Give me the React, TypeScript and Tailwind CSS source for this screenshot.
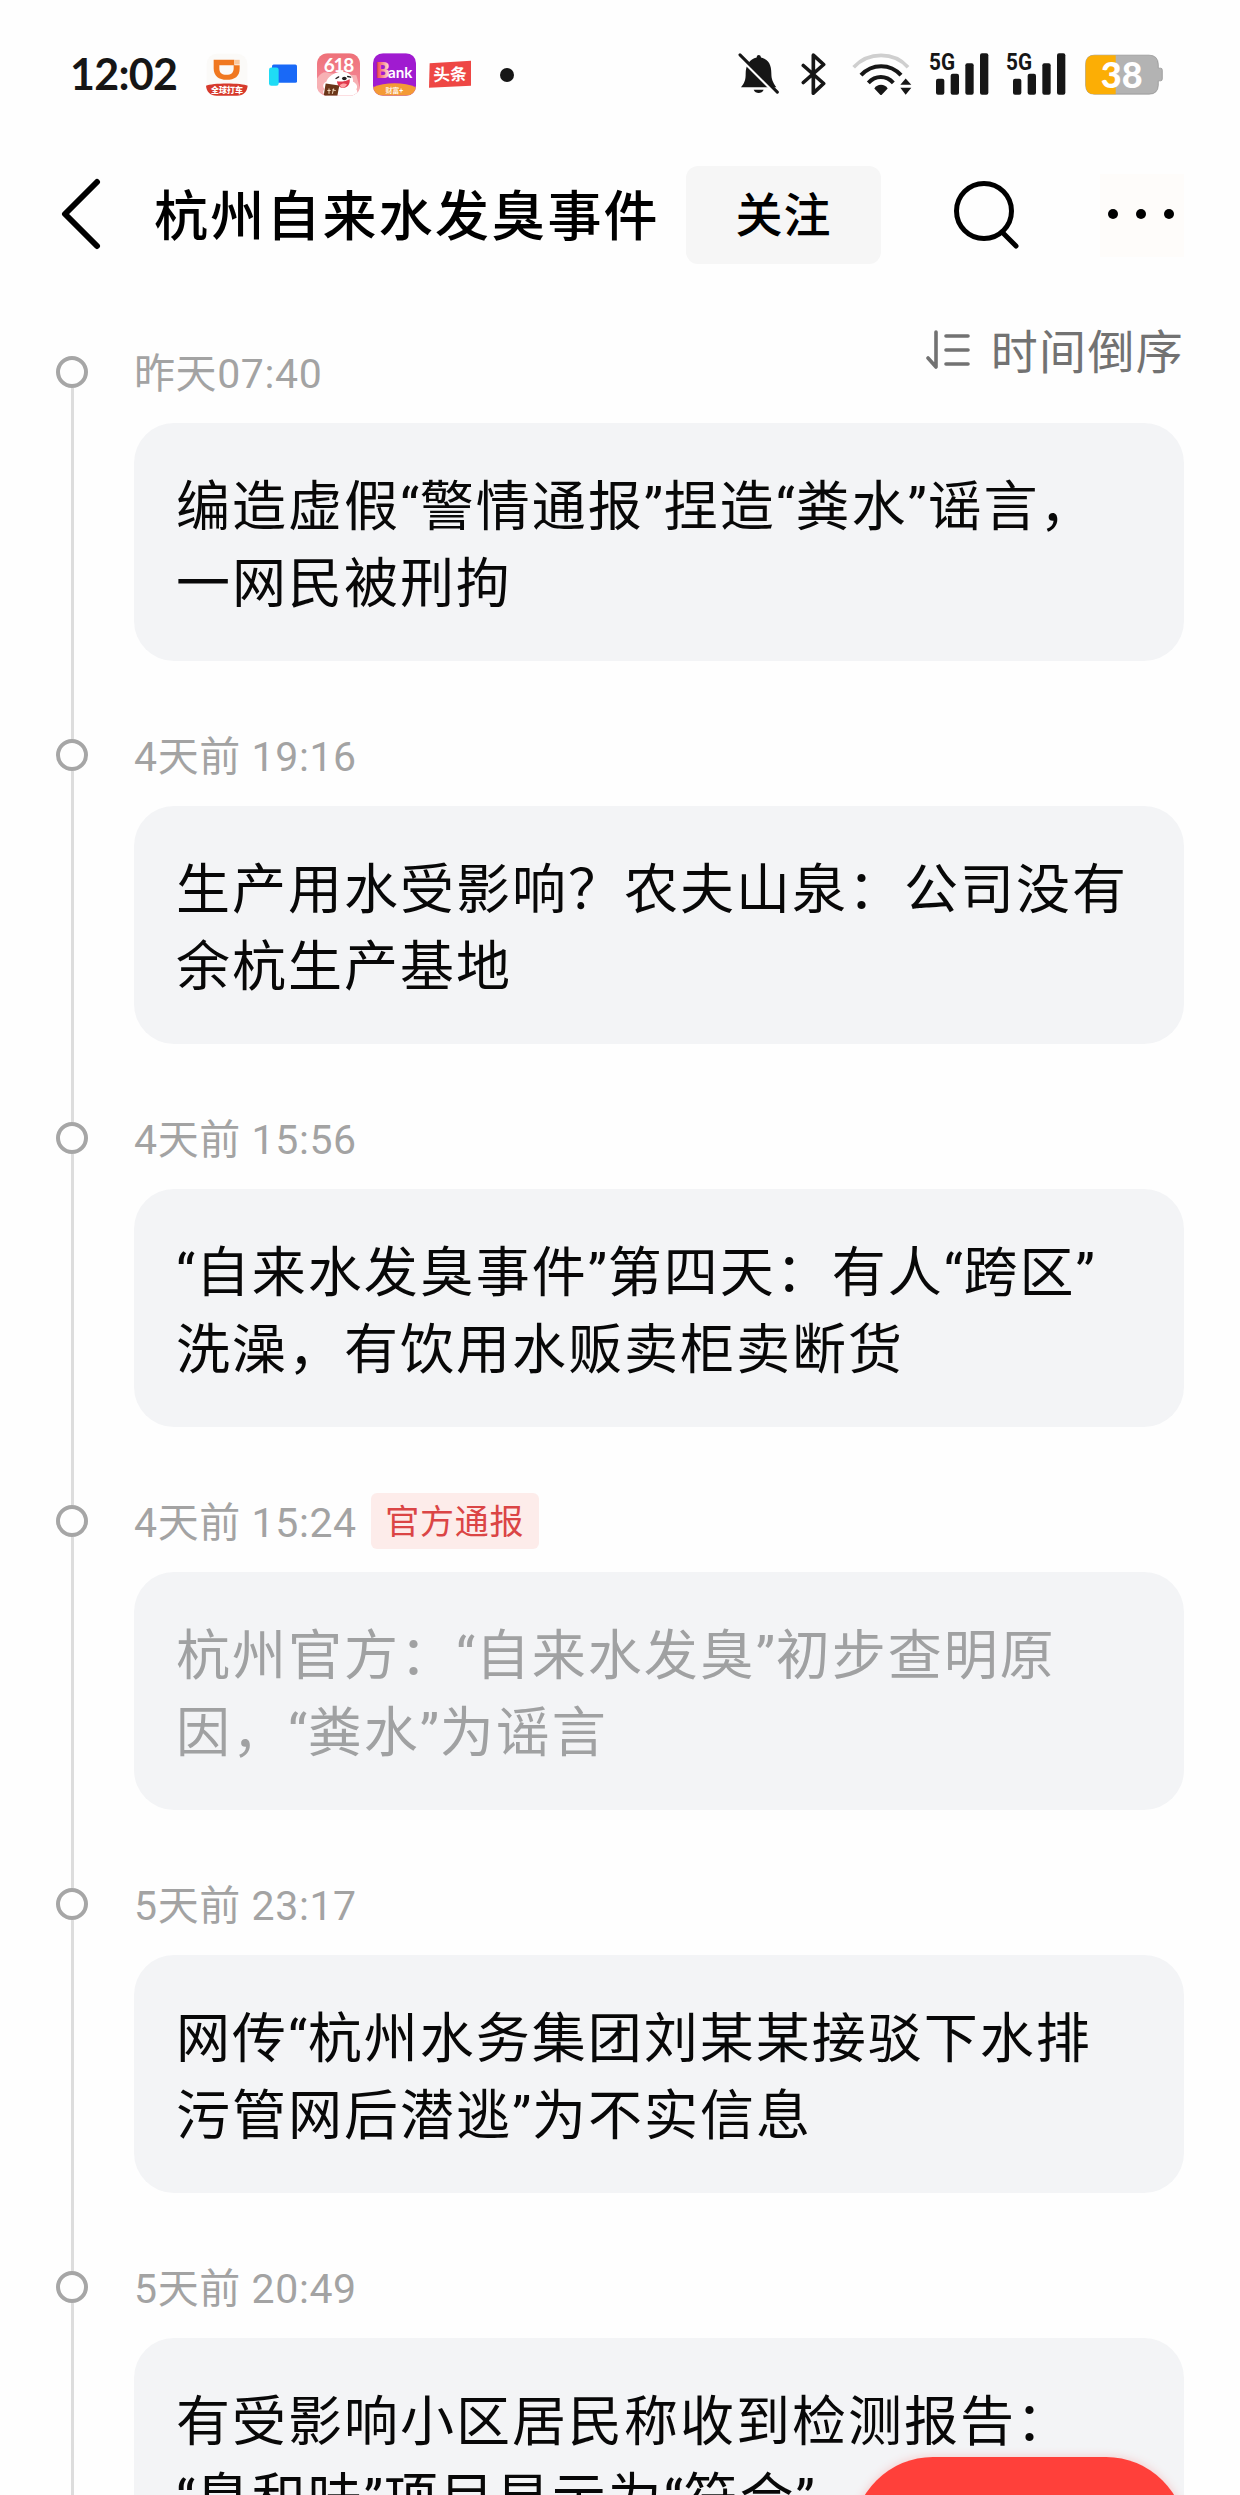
interface TimelineEntry {
  time: string
  lines: string[]
  tag?: string
  read?: boolean
}

const ENTRIES: TimelineEntry[] = [
  { time: '昨天07:40', lines: ['编造虚假“警情通报”捏造“粪水”谣言，', '一网民被刑拘'] },
  { time: '4天前 19:16', lines: ['生产用水受影响？农夫山泉：公司没有', '余杭生产基地'] },
  { time: '4天前 15:56', lines: ['“自来水发臭事件”第四天：有人“跨区”', '洗澡，有饮用水贩卖柜卖断货'] },
  { time: '4天前 15:24', lines: ['杭州官方：“自来水发臭”初步查明原', '因，“粪水”为谣言'], tag: '官方通报', read: true },
  { time: '5天前 23:17', lines: ['网传“杭州水务集团刘某某接驳下水排', '污管网后潜逃”为不实信息'] },
  { time: '5天前 20:49', lines: ['有受影响小区居民称收到检测报告：', '“臭和味”项目显示为“符合”'] },
]

function TaxiIcon() {
  return (
    <svg className="ml-[29px] h-[43px] w-[42px]" viewBox="0 0 126 128">
      <rect x="2" y="2" width="122" height="124" rx="30" fill="#fbfaf8" />
      <path d="M23 20h62v16h-45v9c0 14 8 20 21 20 15 0 22-7 22-20v-9h18v10c0 24-15 34-39 34S23 68 23 46z" fill="#f07820" />
      <path d="M86 20h15v14h-15z" fill="#f9c9a0" />
      <path d="M0 98c18-9 108-9 125 0-2 19-13 30-32 30H32C13 128 2 117 0 98z" fill="#d63a2c" />
      <text x="63" y="121" fontSize="24" fontWeight="900" fill="#fff" textAnchor="middle">全球打车</text>
    </svg>
  )
}

function LinkIcon() {
  return (
    <svg className="ml-[21px] h-[43px] w-[28px]" viewBox="0 0 84 128">
      <rect x="9" y="34" width="75" height="55" rx="5" fill="#1969f7" />
      <rect x="0" y="43" width="29" height="55" rx="7" fill="#1fdcf5" />
    </svg>
  )
}

function SaleIcon() {
  return (
    <svg className="ml-[20px] h-[43px] w-[43px]" viewBox="0 0 129 128">
      <defs>
        <clipPath id="sale"><rect width="129" height="128" rx="32" /></clipPath>
        <linearGradient id="saleBg" x1="0" y1="0" x2="0" y2="1">
          <stop offset="0" stopColor="#ee7078" />
          <stop offset="1" stopColor="#f58fa0" />
        </linearGradient>
      </defs>
      <g clipPath="url(#sale)">
        <rect width="129" height="128" fill="url(#saleBg)" />
        <path d="M0 76c12-20 25-22 38-16l80 6 11 40v22H0z" fill="#f7b1b4" />
        <text x="64" y="58" fontSize="57" fontWeight="700" fill="#fff" textAnchor="middle" letterSpacing="-4" fontFamily="Lato, sans-serif">618</text>
        <path d="M28 86c4-15 23-27 42-30 24-2 41 14 38 30 10 4 16 15 10 22 6 8 1 20-10 20H38c-20 0-24-14-15-20-8-8-4-19 5-22z" fill="#fff" />
        <path d="M60 84c12 3 26 0 38-6 2 16-7 26-20 26-10 0-17-8-18-20z" fill="#e03a4c" />
        <path d="M68 96c7-6 16-7 22-2-6 10-16 13-22 2z" fill="#ffa1a4" />
        <ellipse cx="82" cy="76" rx="7" ry="5" fill="#262020" />
        <path d="M57 76l8-5M92 70l9 2" stroke="#262020" strokeWidth="4" strokeLinecap="round" />
        <path d="M26 91l41 6-6 31H20z" fill="#6b3619" />
        <path d="M31 112h10M36 106v16M46 110l10 2M50 106l-4 16" stroke="#f3dcc0" strokeWidth="3" />
      </g>
    </svg>
  )
}

function BankIcon() {
  return (
    <svg className="ml-[13px] h-[43px] w-[43px]" viewBox="0 0 129 128">
      <defs>
        <clipPath id="bank"><rect width="129" height="128" rx="30" /></clipPath>
        <linearGradient id="bankE" x1="0" x2="1"><stop stopColor="#f23a46" /><stop offset="1" stopColor="#ffe9df" /></linearGradient>
      </defs>
      <g clipPath="url(#bank)">
        <rect width="129" height="128" fill="#a01bd0" />
        <path d="M0 102c34-16 95-16 129 0v26H0z" fill="#f49a35" />
        <text x="9" y="75" fontSize="64" fontWeight="900" fill="url(#bankE)" fontFamily="Roboto, sans-serif">B</text>
        <text x="45" y="75" fontSize="46" fontWeight="700" fill="#fff" textLength="73" lengthAdjust="spacingAndGlyphs" fontFamily="Lato, sans-serif">ank</text>
        <text x="64" y="119" fontSize="21" fontWeight="500" fill="#fff" textAnchor="middle">财富+</text>
      </g>
    </svg>
  )
}

function NewsIcon() {
  return (
    <svg className="ml-[13px] h-[43px] w-[42px]" viewBox="0 0 126 128">
      <path d="M2 30l124-7v75L0 104z" fill="#ee4744" />
      <text x="63" y="82" fontSize="50" fontWeight="700" fill="#fff" textAnchor="middle" transform="rotate(-2 63 64)">头条</text>
    </svg>
  )
}

function MutedBell() {
  return (
    <svg className="h-[43px] w-[42px]" viewBox="0 0 126 128" fill="#161616">
      <path d="M9 102c12-13 14-24 14-40 0-26 12-44 33-49 0-10 12-10 13 0 23 5 31 23 31 47 0 17 4 27 15 42z" />
      <path d="M47 110h30c-5 13-25 13-30 0z" />
      <path d="M4 12l114 114" stroke="#fefefe" strokeWidth="9" />
      <path d="M6 5l112 112" stroke="#161616" strokeWidth="9" strokeLinecap="round" />
    </svg>
  )
}

function BluetoothIcon() {
  return (
    <svg className="ml-[21px] h-[43px] w-[26px]" viewBox="0 0 78 128" fill="none" stroke="#161616" strokeWidth="11" strokeLinejoin="round" strokeLinecap="round">
      <path d="M7 37l61 54-31 29V6l31 28L7 88" />
    </svg>
  )
}

function WifiIcon() {
  return (
    <svg className="ml-[25px] h-[43px] w-[60px]" viewBox="0 0 180 128" fill="none">
      <path d="M5 42C50-5 125-5 168 42" stroke="#cfcfcf" strokeWidth="11" />
      <path d="M27 66C60 30 115 30 147 66" stroke="#161616" strokeWidth="12" />
      <path d="M49 89c22-23 53-23 75 0" stroke="#161616" strokeWidth="12" />
      <path d="M67 106c8-15 32-15 40 0l-17 18q-3 3-6 0z" fill="#161616" />
      <path d="M145 95l16-19 17 19zM145 104h33l-17 21z" fill="#161616" />
    </svg>
  )
}

function SignalIcon() {
  return (
    <svg className="ml-[17px] h-[43px] w-[60px] overflow-visible" viewBox="0 0 180 128" fill="#161616">
      <text x="0" y="50" fontSize="70" fontWeight="700" textLength="78" lengthAdjust="spacingAndGlyphs" fontFamily="Roboto, sans-serif">5G</text>
      <rect x="21" y="77" width="25" height="48" rx="6" />
      <rect x="65" y="62" width="25" height="63" rx="6" />
      <rect x="109" y="30" width="25" height="95" rx="6" />
      <rect x="153" y="0" width="25" height="125" rx="6" />
    </svg>
  )
}

function BatteryIcon() {
  return (
    <svg className="ml-[19px] h-[43px] w-[78px]" viewBox="0 0 234 128">
      <path d="M28 6h164q27 0 28 28v11h7q5 0 5 6v26q0 6-5 6h-7v13q-1 27-28 27H28Q2 123 2 96V34Q2 6 28 6z" fill="#b3b3b3" stroke="#8d8d8d" strokeWidth="2" />
      <path d="M28 6h64v117H28Q2 123 2 96V34Q2 6 28 6z" fill="#fcae05" />
      <text x="110" y="103" fontSize="108" fontWeight="900" fill="#fff" textAnchor="middle" fontFamily="Lato, sans-serif">38</text>
    </svg>
  )
}

function StatusBar() {
  return (
    <div className="flex h-[150px] items-start pt-[53px] pr-[77px] pl-[70px]">
      <div className="flex h-[43px] items-center">
        <span className="mb-[2px] w-[107px] font-[Lato] text-[43px] leading-[43px] font-bold tracking-[-0.7px] whitespace-nowrap text-[#161616]">12:02</span>
        <TaxiIcon />
        <LinkIcon />
        <SaleIcon />
        <BankIcon />
        <NewsIcon />
        <span className="ml-[29px] h-[14px] w-[14px] rounded-full bg-[#161616]" />
      </div>
      <div className="ml-auto flex h-[43px] items-center">
        <MutedBell />
        <BluetoothIcon />
        <WifiIcon />
        <SignalIcon />
        <SignalIcon />
        <BatteryIcon />
      </div>
    </div>
  )
}

function TopicHeader() {
  return (
    <header className="flex h-[130px] items-center pr-[56px] pl-[60px]">
      <button type="button" aria-label="返回">
        <svg className="h-[74px] w-[44px]" viewBox="0 0 44 74" fill="none" stroke="#000" strokeWidth="6" strokeLinecap="round" strokeLinejoin="round">
          <path d="M37 4L5 36l32 32" />
        </svg>
      </button>
      <h1 className="ml-[50px] w-[502px] pt-[6px] text-[54px] leading-[80px] font-medium tracking-[2.2px] whitespace-nowrap">杭州自来水发臭事件</h1>
      <button type="button" className="ml-[30px] h-[98px] w-[195px] rounded-xl bg-[#f6f6f6] pt-[2px] text-[47px] leading-[80px] font-medium tracking-[1px]">关注</button>
      <button type="button" className="ml-[72px]" aria-label="搜索">
        <svg className="h-[70px] w-[68px]" viewBox="0 0 68 70" fill="none" stroke="#000" strokeWidth="5" strokeLinecap="round">
          <circle cx="31" cy="31" r="27.500" />
          <path d="M49 52l14 14" />
        </svg>
      </button>
      <button type="button" className="ml-auto flex h-[83px] w-[84px] items-center justify-center gap-[18px] bg-[#fefcfa] pr-[2px] pb-[3px]" aria-label="更多">
        <span className="h-[10px] w-[10px] rounded-full bg-black" />
        <span className="h-[10px] w-[10px] rounded-full bg-black" />
        <span className="h-[10px] w-[10px] rounded-full bg-black" />
      </button>
    </header>
  )
}

function SortToggle() {
  return (
    <button type="button" className="mb-[42px] ml-auto flex items-center gap-[19px] text-[47px] leading-[60px] tracking-[1.3px] text-[#727272]">
      <svg className="mb-[3px] h-[42px] w-[46px]" viewBox="0 0 46 42" fill="none" stroke="currentColor" strokeWidth="3.6" strokeLinecap="round" strokeLinejoin="round">
        <path d="M2 29l8 9V3M20 7h22M20 21h22M20 35h22" />
      </svg>
      <span className="pt-[3px]">时间倒序</span>
    </button>
  )
}

// curly quotes sit a little tighter than the han characters around them
function Headline({ text }: { text: string }) {
  return (
    <p>
      {text.split(/([“”])/).map((part, i) =>
        i % 2 === 1 ? <span key={i} className="tracking-[0.7px]">{part}</span> : part
      )}
    </p>
  )
}

function TimelineItem({ entry, first }: { entry: TimelineEntry; first: boolean }) {
  return (
    <li className="flex">
      <div className="flex w-[134px] shrink-0 flex-col pt-[35px] pl-[56px]">
        <span className="h-8 w-8 shrink-0 rounded-full border-4 border-[#a6a6a6]" />
        <span className="-mb-[35px] ml-[15px] w-[3px] flex-1 bg-[#dddddd]" />
      </div>
      <div className="w-[1050px] pb-[43px]">
        <div className="flex h-[102px] items-center">
          <time className="pt-[3px] text-[41px] leading-[60px] tracking-[0.6px] whitespace-pre text-[#a3a3a3]">{entry.time}</time>
          {entry.tag && (
            <span className="ml-[14px] h-[56px] w-[168px] rounded-md bg-[#fdecea] text-center text-[34px] leading-[59px] tracking-[0.7px] text-[#db4545]">{entry.tag}</span>
          )}
          {first && <SortToggle />}
        </div>
        <article className={`h-[238px] rounded-[40px] bg-[#f3f4f6] pt-[46px] pl-[42px] text-[54px] leading-[77px] tracking-[2px] whitespace-nowrap ${entry.read ? 'text-[#a0a1a2]' : 'text-[#080808]'}`}>
          {entry.lines.map((line) => (
            <Headline key={line} text={line} />
          ))}
        </article>
      </div>
    </li>
  )
}

export default function App() {
  return (
    <div lang="zh-CN" className="relative h-[2495px] w-[1240px] overflow-hidden bg-[#fefefe] font-[Roboto,'Noto_Sans_CJK_SC',sans-serif] text-black">
      <StatusBar />
      <TopicHeader />
      <ul className="pt-[41px]">
        {ENTRIES.map((entry, i) => (
          <TimelineItem key={entry.time} entry={entry} first={i === 0} />
        ))}
      </ul>
      <button type="button" className="absolute top-[2457px] left-[853px] h-[160px] w-[333px] rounded-full bg-[#ff403a] shadow-[0_0_10px_rgba(255,64,58,0.25)]" aria-label="发布" />
    </div>
  )
}
